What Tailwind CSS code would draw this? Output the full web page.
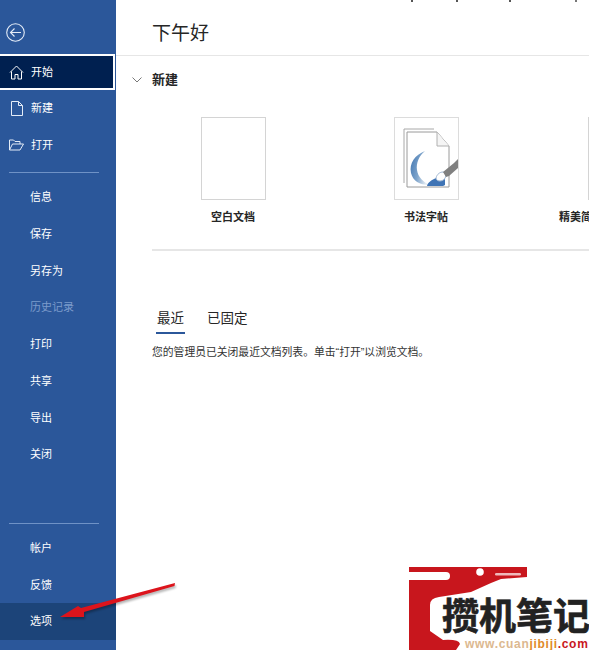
<!DOCTYPE html>
<html lang="zh">
<head>
  <meta charset="UTF-8">
  <title>Word 开始</title>
  <script src="https://cdn.jsdelivr.net/npm/@tailwindcss/browser@4"></script>
</head>
<body class="bg-white overflow-hidden font-['Liberation_Sans','Noto_Sans_CJK_SC',sans-serif]">
  <div class="relative w-[589px] h-[650px] flex overflow-hidden">

    <!-- sidebar -->
    <aside class="w-[116px] h-full shrink-0 bg-[#2b579a] text-white text-[11px] flex flex-col">
      <div class="h-[54px] pl-[6px] pt-[23px]">
        <svg width="19" height="19" viewBox="0 0 19 19" fill="none" stroke="#e4ecf7" stroke-width="1.1"><circle cx="9.500" cy="9.500" r="8.800"/><path d="M15 9.500H4.500M8.500 5.500l-4 4 4 4"/></svg>
      </div>
      <div class="h-[36px] w-[115px] bg-[#002050] border-2 border-white border-l-0 flex items-center pl-[9px] gap-[7px]">
        <svg width="15" height="15" viewBox="0 0 15 15" fill="none" stroke="#fff" stroke-width="1"><path d="M1 7.500 7.500 1 14 7.500M2.500 6.500V14H6V9.500h3V14h3.500V6.500"/></svg>
        <span>开始</span>
      </div>
      <div class="h-[37px] flex items-center pl-[11px] gap-[8px]">
        <svg width="12" height="15" viewBox="0 0 12 15" fill="none" stroke="#e4ecf7" stroke-width="1"><path d="M.5.5h7l4 4v10H.5zM7.500.5v4h4"/></svg>
        <span>新建</span>
      </div>
      <div class="h-[36px] flex items-center pl-[9px] gap-[7px]">
        <svg width="15" height="12" viewBox="0 0 15 12" fill="none" stroke="#e4ecf7" stroke-width="1"><path d="M.5 11V1h4l1.500 1.500H11V5M.5 11h10.500L14.500 5H3.500z"/></svg>
        <span>打开</span>
      </div>
      <div class="h-[1px] w-[90px] ml-[9px] mt-[9px] mb-[5.500px] bg-[#6f92c6]"></div>
      <nav class="flex flex-col pl-[30px]">
        <span class="h-[37px] flex items-center">信息</span>
        <span class="h-[37px] flex items-center">保存</span>
        <span class="h-[37px] flex items-center">另存为</span>
        <span class="h-[36px] flex items-center text-[#7c9bcb]">历史记录</span>
        <span class="h-[37px] flex items-center">打印</span>
        <span class="h-[37px] flex items-center">共享</span>
        <span class="h-[37px] flex items-center">导出</span>
        <span class="h-[36px] flex items-center">关闭</span>
      </nav>
      <div class="h-[1px] w-[90px] ml-[9px] mt-auto mb-[6px] bg-[#6f92c6]"></div>
      <span class="h-[37px] flex items-center pl-[30px]">帐户</span>
      <span class="h-[36px] flex items-center pl-[30px]">反馈</span>
      <span class="h-[37px] flex items-center pl-[30px] bg-[#1c4479]">选项</span>
      <div class="h-[10px]"></div>
    </aside>

    <!-- main -->
    <main class="flex-1 min-w-0 text-[#262626]">
      <div class="h-[56px] border-b border-[#e6e6e6] pl-[36px] pt-[22px] text-[19px] leading-[24px]">下午好</div>
      <div class="h-[46px] pt-[2px] flex items-center pl-[16px] gap-[10px] text-[13px] font-bold">
        <svg width="10" height="6" viewBox="0 0 10 6" fill="none" stroke="#555" stroke-width="0.8"><path d="M.5.5 5 5 9.500.5"/></svg>
        <span>新建</span>
      </div>
      <div class="ml-[36px] mt-[15px] h-[134px] w-[437px] border-b-2 border-[#e6e6e6] flex overflow-hidden">
        <div class="w-[114px] ml-[24px] flex flex-col items-center shrink-0">
          <div class="w-[65px] h-[83px] border border-[#d4d4d4] bg-white"></div>
          <span class="mt-[9px] text-[11px] font-bold">空白文档</span>
        </div>
        <div class="w-[114px] ml-[79px] flex flex-col items-center shrink-0">
          <div class="w-[65px] h-[83px] border border-[#dcdcdc] bg-white">
            <svg width="63" height="81" viewBox="0 0 63 81" fill="none">
              <defs>
                <linearGradient id="curl" x1="0" y1="0" x2="1" y2="0.4">
                  <stop offset="0" stop-color="#3f74b0"/>
                  <stop offset="0.55" stop-color="#7ea4cb"/>
                  <stop offset="1" stop-color="#e3ebf3"/>
                </linearGradient>
              </defs>
              <path d="M39 11H9v54" stroke="#a8a8a8"/>
              <path d="M12 69V14h30l12 14v41z" fill="#fff" stroke="#9a9a9a"/>
              <path d="M42 14v14h12" fill="#f5f5f5" stroke="#b0b0b0"/>
              <path d="M30 33C20 37 14 45 16 55c2 8 8 12 19 12-7-3-12-8-13-15-1-7 2-14 8-19z" fill="url(#curl)"/>
              <path d="M32 68c1-4 5-6 9-8 2 2 6 3 9 1v6c-1 1-3 1-4 1z" fill="#3f74b5"/>
              <path d="M41 60c1-4 4-6 7-6 2 0 3 2 3 4-1 3-3 5-6 5-2 0-4-1-4-3z" fill="#fff" stroke="#9fb6d2"/>
              <path d="M48 54l11-9 4-4v9l-9 8-3 1z" fill="#808080"/>
            </svg>
          </div>
          <span class="mt-[9px] text-[11px] font-bold">书法字帖</span>
        </div>
        <div class="w-[114px] ml-[80px] flex flex-col items-center shrink-0">
          <div class="w-[65px] h-[83px] border border-[#d4d4d4] bg-white"></div>
          <span class="mt-[9px] self-start -ml-[4px] text-[11px] font-bold whitespace-nowrap">精美简历</span>
        </div>
      </div>
      <div class="ml-[40px] mt-[56px] flex gap-[22px] text-[13.500px]">
        <div class="flex flex-col items-center w-[29px]">
          <span class="h-[25px] leading-[24px] whitespace-nowrap">最近</span>
          <div class="w-[29px] h-[2px] bg-[#2b579a]"></div>
        </div>
        <span class="leading-[24px]">已固定</span>
      </div>
      <p class="ml-[36px] mt-[11px] text-[10.800px] leading-[14px] whitespace-nowrap text-[#333]">您的管理员已关闭最近文档列表。单击“打开”以浏览文档。</p>
    </main>

    <!-- cut off text at the top edge -->
    <div class="absolute top-0 left-[411px] w-[2px] h-[2px] bg-[#555]"></div>
    <div class="absolute top-0 left-[456px] w-[2px] h-[2px] bg-[#555]"></div>
    <div class="absolute top-0 left-[509px] w-[2px] h-[2px] bg-[#555]"></div>
    <div class="absolute top-0 left-[575px] w-[2px] h-[2px] bg-[#777]"></div>

    <!-- red arrow annotation -->
    <svg class="absolute left-0 top-0 pointer-events-none" width="589" height="650" viewBox="0 0 589 650" fill="none">
      <defs><filter id="soft" x="-10%" y="-30%" width="120%" height="160%"><feGaussianBlur stdDeviation="1.200"/></filter></defs>
      <path d="M175 583 174.500 586 84 612 84 617H60L78 606 81 608z" fill="#000" opacity="0.3" filter="url(#soft)" transform="translate(1 2)"/>
      <path d="M175 583 174.500 586 84 612 84 617H60L78 606 81 608z" fill="#dc141c"/>
    </svg>

    <!-- watermark -->
    <div class="absolute left-[409px] top-[567px] w-[180px] h-[83px]">
      <svg class="absolute left-0 top-0" width="180" height="83" viewBox="0 0 180 83">
        <path d="M0 0H118V10L92 12 82 16 62 25 30 30Q21 31 21 38V64L34 73Q50 72 51 77L47 83H0z" fill="#c8161d"/>
        <path d="M0 5H37Q41 5 41 9 41 13 37 13H0z" fill="#fff"/>
        <circle cx="71" cy="5" r="3.800" fill="#fff"/>
        <rect x="86" y="6" width="26" height="2.500" rx="1.200" fill="#fff" opacity="0.7"/>
      </svg>
      <span class="absolute left-[33px] top-[32px] text-[37px] leading-[38px] font-bold text-[#222] whitespace-nowrap [-webkit-text-stroke:0.6px_#222]">攒机笔记</span>
      <span class="absolute left-[56px] top-[71px] text-[12px] leading-[12px] font-bold tracking-[0.7px] whitespace-nowrap"><span class="text-[#dcb88f]">www.cuan</span><span class="text-[#e08a2a]">jibiji</span><span class="text-[#c8161d]">.com</span></span>
    </div>
  </div>
</body>
</html>
